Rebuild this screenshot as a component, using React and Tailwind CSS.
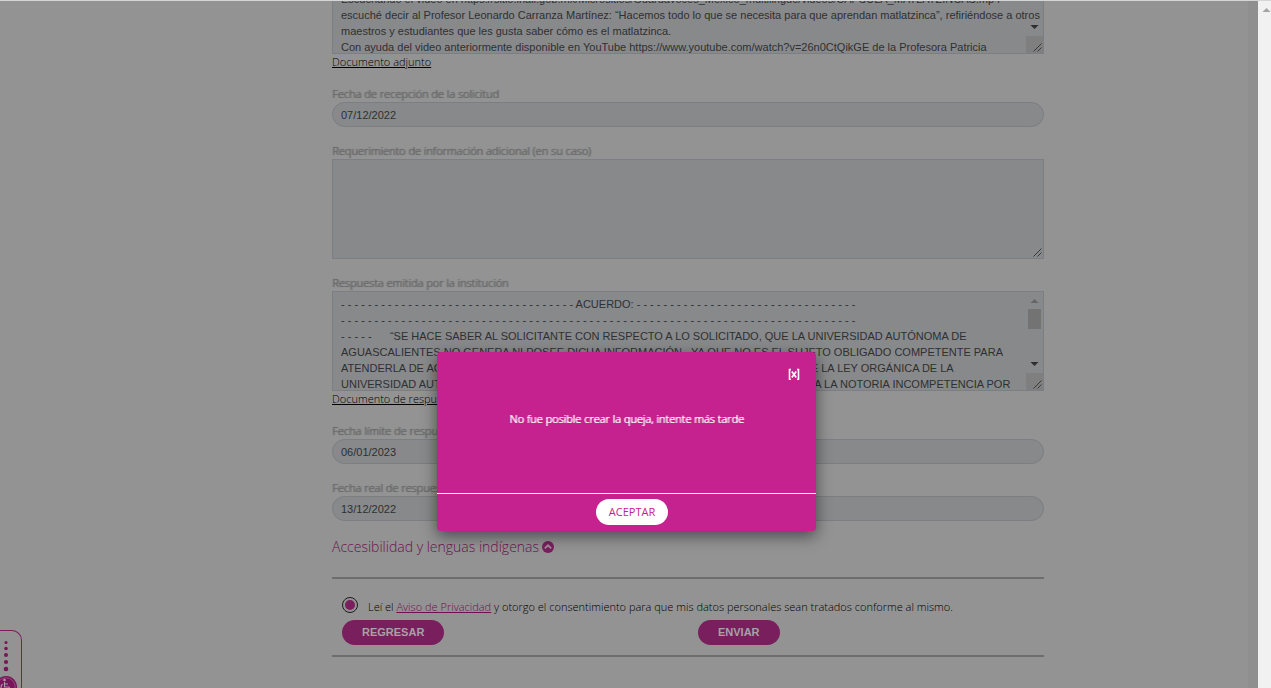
import React from "react";

const BORDER = "border border-[#7b7e82]";
const FIELD = "text-[#2e3032] font-['Liberation_Sans',sans-serif] text-[11px]";

const SOLICITUD = [
  "",
  "",
  "Escuchando el video en https://sitio.inali.gob.mx/Micrositios/Guardavoces_Mexico_multilingue/videos/CAPSULA_MATLATZINCAS.mp4",
  "escuché decir al Profesor Leonardo Carranza Martínez: “Hacemos todo lo que se necesita para que aprendan matlatzinca”, refiriéndose a otros",
  "maestros y estudiantes que les gusta saber cómo es el matlatzinca.",
  "Con ayuda del video anteriormente disponible en YouTube https://www.youtube.com/watch?v=26n0CtQikGE de la Profesora Patricia",
].join("\n");

const dashes = (n) => Array(n).fill("-").join(" ");

const RESPUESTA = [
  dashes(35) + " ACUERDO: " + dashes(33),
  dashes(77),
  "- - - - -      “SE HACE SABER AL SOLICITANTE CON RESPECTO A LO SOLICITADO, QUE LA UNIVERSIDAD AUTÓNOMA DE",
  "AGUASCALIENTES NO GENERA NI POSEE DICHA INFORMACIÓN , YA QUE NO ES EL SUJETO OBLIGADO COMPETENTE PARA",
  "ATENDERLA DE ACUERDO CON LAS ATRIBUCIONES QUE LE CONFIEREN LOS TEXTOS DE LA LEY ORGÁNICA DE LA",
  "UNIVERSIDAD AUTÓNOMA DE AGUASCALIENTES, TODA VEZ POR LO QUE SE DECLARARA LA NOTORIA INCOMPETENCIA POR",
].join("\n");

function Grip() {
  return (
    <svg className="size-4" viewBox="0 0 16 16" stroke="#3a3a3a" strokeWidth="1" aria-hidden="true">
      <path d="M6.5 14.5 L14.5 6.5 M10.5 14.5 L14.5 10.5" />
    </svg>
  );
}

function Label({ htmlFor, children }) {
  return (
    <label
      htmlFor={htmlFor}
      className="block text-[11px] leading-4 font-light text-[#6c6c6c] [text-shadow:1px_0_0_#6c6c6c,0_0_1px_#6c6c6c]"
    >
      {children}
    </label>
  );
}

function Area({ id, value, scroll, label }) {
  return (
    <div className={`relative h-[100px] ${BORDER} bg-[#88898b]`}>
      <textarea
        id={id}
        aria-label={label}
        readOnly
        wrap="off"
        defaultValue={value}
        className={`${FIELD} block h-full w-full resize-none overflow-hidden bg-transparent py-1 pl-2 leading-4 outline-none`}
      />
      {scroll ? (
        <div className="absolute inset-y-0 right-0 flex w-[17px] flex-col items-center">
          <svg className="h-[15px] w-[17px]" viewBox="0 0 17 15" aria-hidden="true">
            <path d="M4.5 11 L8.5 7 L12.5 11 Z" fill="#666" />
          </svg>
          <div className="mt-[2px] h-5 w-[13px] bg-[#737373]" />
          <div className="flex-1" />
          <svg className="h-[17px] w-[17px]" viewBox="0 0 17 17" aria-hidden="true">
            <path d="M4.5 6 L8.5 10 L12.5 6 Z" fill="#2e2e2e" />
          </svg>
          <div className="flex h-[17px] w-[17px] items-end justify-end bg-[#7f7f80]">
            <Grip />
          </div>
        </div>
      ) : (
        <div className="absolute right-0 bottom-0">
          <Grip />
        </div>
      )}
    </div>
  );
}

function DateField({ id, label, value }) {
  return (
    <div>
      <Label htmlFor={id}>{label}</Label>
      <input
        id={id}
        readOnly
        defaultValue={value}
        className={`${FIELD} ${BORDER} block h-[25px] w-full rounded-full bg-[#88898b] px-2 outline-none`}
      />
    </div>
  );
}

function DocLink({ children }) {
  return (
    <a href="#documento" className="block w-fit text-[11px] leading-4 font-light text-black underline">
      {children}
    </a>
  );
}

function ActionButton({ children }) {
  return (
    <button
      type="button"
      className="h-[25px] rounded-full bg-[#7a1f5e] px-5 font-['Liberation_Sans',sans-serif] text-[11px] font-bold text-[#aaa0a6]"
    >
      {children}
    </button>
  );
}

function AccessibilityTab() {
  return (
    <button
      type="button"
      aria-label="Accesibilidad"
      className="absolute bottom-0 left-0 h-[58px] w-[22px] rounded-tr-[10px] border-t border-r border-[#7a1f5e]"
    >
      <svg className="h-[57px] w-[21px]" viewBox="0 0 21 57" aria-hidden="true">
        <g fill="#7a1458">
          <circle cx="6" cy="11.5" r="1.5" />
          <circle cx="6" cy="17.5" r="1.8" />
          <circle cx="6" cy="24" r="2" />
          <circle cx="6" cy="31" r="2.1" />
          <circle cx="6" cy="38" r="2.3" />
          <circle cx="6" cy="56" r="11" />
        </g>
        <circle cx="6" cy="56" r="9.2" fill="none" stroke="#96648a" strokeWidth="0.7" />
        <circle cx="4.5" cy="49" r="1.3" fill="#a99aa4" />
        <path d="M4.5 51 V56 H9 L11 60 M4.5 53 H8 M2.5 53 A4.5 4.5 0 0 0 3 60" fill="none" stroke="#a99aa4" strokeWidth="1.2" />
      </svg>
    </button>
  );
}

function Dialog() {
  return (
    <div className="absolute inset-0 flex items-start justify-center pt-[351px] pl-[5px]">
      <div
        role="dialog"
        aria-modal="true"
        aria-describedby="mensaje"
        className="w-[379px] rounded bg-[#c52290] text-white shadow-[0_5px_15px_rgba(0,0,0,0.5)]"
      >
        <div className="flex h-[141px] flex-col">
          <div className="flex justify-end px-4 pt-4">
            <button type="button" aria-label="Cerrar" className="h-3 w-3">
              <svg className="size-3" viewBox="0 0 12 12" fill="none" stroke="white" aria-hidden="true">
                <path d="M3 1.5 H1.5 V11.5 H3 M9 1.5 H10.5 V11.5 H9" strokeWidth="1.6" />
                <path d="M3.8 3.4 L8.2 9.6 M8.2 3.4 L3.8 9.6" strokeWidth="1.7" />
              </svg>
            </button>
          </div>
          <p
            id="mensaje"
            className="mt-[31px] text-center text-[11px] leading-4 font-light [text-shadow:1px_0_0_#fff]"
          >
            No fue posible crear la queja, intente más tarde
          </p>
        </div>
        <div className="flex justify-center border-t border-white pt-[5px] pb-[6px] pl-[11px]">
          <button type="button" className="h-[26px] rounded-full bg-white px-[13px] text-[11px] text-[#c52290]">
            ACEPTAR
          </button>
        </div>
      </div>
    </div>
  );
}

export default function App() {
  return (
    <div className="flex h-screen overflow-hidden border-t border-[#d4d6d6] bg-[#939393] font-['Open_Sans',sans-serif]">
      <div className="relative min-w-0 flex-1 overflow-hidden border-r-[10px] border-[#8f8f8f]">
        <main className="-mt-[47px] flex flex-col gap-4 pr-[204px] pl-[332px]">
          <div>
            <Area id="solicitud" label="Solicitud" value={SOLICITUD} scroll />
            <DocLink>Documento adjunto</DocLink>
          </div>
          <DateField id="recepcion" label="Fecha de recepción de la solicitud" value="07/12/2022" />
          <div>
            <Label htmlFor="requerimiento">Requerimiento de información adicional (en su caso)</Label>
            <Area id="requerimiento" value="" />
          </div>
          <div>
            <Label htmlFor="respuesta">Respuesta emitida por la institución</Label>
            <Area id="respuesta" value={RESPUESTA} scroll />
            <DocLink>Documento de respuesta</DocLink>
          </div>
          <DateField id="limite" label="Fecha límite de respuesta" value="06/01/2023" />
          <DateField id="real" label="Fecha real de respuesta" value="13/12/2022" />
          <div>
            <button type="button" className="flex h-5 items-center gap-[3px] text-[14px] leading-5 font-light text-[#70104f]">
              Accesibilidad y lenguas indígenas
              <svg className="size-3" viewBox="0 0 12 12" aria-hidden="true">
                <circle cx="6" cy="6" r="6" fill="#7a1f5e" />
                <path d="M2.8 7.4 L6 4.3 L9.2 7.4" fill="none" stroke="#a08f99" strokeWidth="1.8" />
              </svg>
            </button>
            <div className="mt-5 border-y-2 border-[#6d6d6d] px-[10px] pt-[18px] pb-[10px]">
              <div className="flex h-[21px] gap-[10px]">
                <input
                  id="aviso"
                  type="radio"
                  defaultChecked
                  className="size-4 shrink-0 appearance-none rounded-full border border-[#1c1c1c] bg-[#7a1f5e] bg-clip-content p-[2px]"
                />
                <label htmlFor="aviso" className="pt-[2px] text-[11px] leading-4 font-light text-black">
                  Leí el{" "}
                  <a href="#aviso-privacidad" className="text-[#70104f] underline">
                    Aviso de Privacidad
                  </a>{" "}
                  y otorgo el consentimiento para que mis datos personales sean tratados conforme al mismo.
                </label>
              </div>
              <div className="grid grid-cols-2 gap-5">
                <div>
                  <ActionButton>REGRESAR</ActionButton>
                </div>
                <div>
                  <ActionButton>ENVIAR</ActionButton>
                </div>
              </div>
            </div>
          </div>
        </main>
        <AccessibilityTab />
        <Dialog />
      </div>
      <div className="w-[13px] shrink-0 bg-[#f1f1f1]">
        <svg className="h-4 w-[13px]" viewBox="0 0 13 16" aria-hidden="true">
          <path d="M4.5 11 L8.5 7 L12.5 11 Z" fill="#a3a3a3" />
        </svg>
      </div>
    </div>
  );
}
